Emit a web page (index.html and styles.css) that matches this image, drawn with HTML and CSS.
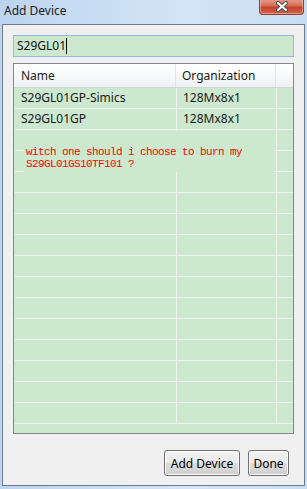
FILE: index.html
```html
<!DOCTYPE html>
<html lang="en">
<head>
  <meta charset="UTF-8" />
  <title>Add Device</title>
  <link rel="stylesheet" href="styles.css">
</head>
<body>

  <div class="window">
    <div class="titlebar">
      <span class="title">Add Device</span>
      <span class="close-btn">
        <svg width="14" height="11" viewBox="0 0 14 11">
          <path d="M3 2 L11 9 M11 2 L3 9" stroke="#4a4f57" stroke-width="4" stroke-linecap="round"/>
          <path d="M3 2 L11 9 M11 2 L3 9" stroke="#ffffff" stroke-width="2" stroke-linecap="round"/>
        </svg>
      </span>
    </div>

    <div class="client">
      <div class="search"><span class="caret">S29GL01</span></div>

      <div class="list">
        <div class="row head">
          <div class="cell">Name</div>
          <div class="cell">Organization</div>
          <div class="cell"></div>
        </div>
        <div class="row">
          <div class="cell">S29GL01GP-Simics</div>
          <div class="cell">128Mx8x1</div>
          <div class="cell"></div>
        </div>
        <div class="row">
          <div class="cell">S29GL01GP</div>
          <div class="cell">128Mx8x1</div>
          <div class="cell"></div>
        </div>
        <div class="row"><div class="cell"></div><div class="cell"></div><div class="cell"></div></div>
        <div class="row"><div class="cell"></div><div class="cell"></div><div class="cell"></div></div>
        <div class="row"><div class="cell"></div><div class="cell"></div><div class="cell"></div></div>
        <div class="row"><div class="cell"></div><div class="cell"></div><div class="cell"></div></div>
        <div class="row"><div class="cell"></div><div class="cell"></div><div class="cell"></div></div>
        <div class="row"><div class="cell"></div><div class="cell"></div><div class="cell"></div></div>
        <div class="row"><div class="cell"></div><div class="cell"></div><div class="cell"></div></div>
        <div class="row"><div class="cell"></div><div class="cell"></div><div class="cell"></div></div>
        <div class="row"><div class="cell"></div><div class="cell"></div><div class="cell"></div></div>
        <div class="row"><div class="cell"></div><div class="cell"></div><div class="cell"></div></div>
        <div class="row"><div class="cell"></div><div class="cell"></div><div class="cell"></div></div>
        <div class="row"><div class="cell"></div><div class="cell"></div><div class="cell"></div></div>
        <div class="row"><div class="cell"></div><div class="cell"></div><div class="cell"></div></div>
        <div class="row"><div class="cell"></div><div class="cell"></div><div class="cell"></div></div>

        <div class="note">witch one should i choose to burn my<br>S29GL01GS10TF101 ?</div>
      </div>

      <div class="buttons">
        <button class="btn btn-add">Add Device</button>
        <button class="btn btn-done">Done</button>
      </div>
    </div>
  </div>

</body>
</html>
```

FILE: styles.css
```css
:root {
  --green: #cce8cf;
  --grid-line: #eef3ef;
  --client-bg: #f0f0f0;
}

body {
  margin: 0;
  font-family: 'Noto Sans', sans-serif;
  font-size: 12px;
  color: #1a1a1a;
}

.window {
  width: 307px;
  height: 489px;
  background: linear-gradient(90deg, #bcd5ee, #d3e5f7 60%, #c9def3);
  display: flex;
  flex-direction: column;
  overflow: hidden;
}

.titlebar {
  position: relative;
  height: 24px;
  display: flex;
  align-items: center;
  padding-left: 4px;
}

.title {
  font-size: 12px;
  color: #1b1b1b;
  margin-top: -3px;
}

.close-btn {
  position: absolute;
  top: -1px;
  right: 3px;
  width: 45px;
  height: 16px;
  box-sizing: border-box;
  border: 1px solid #8a4336;
  border-top: none;
  border-radius: 0 0 4px 4px;
  background: linear-gradient(#e5a08f, #d66a52 45%, #c5422b 55%, #d2654c);
  display: flex;
  align-items: center;
  justify-content: center;
  box-shadow: inset 0 0 0 1px rgba(255, 210, 200, 0.45);
}

.client {
  margin: 0 2px 2px 2px;
  border: 1px solid #6e7c8c;
  background: var(--client-bg);
  padding: 10px 10px 9px;
  display: flex;
  flex-direction: column;
}

.search {
  height: 22px;
  box-sizing: border-box;
  border: 1px solid #8fbbe6;
  background: var(--green);
  padding: 0 0 0 3px;
  display: flex;
  align-items: center;
  font-size: 12px;
  color: #111;
  margin-bottom: 6px;
}

.caret {
  border-right: 1px solid #000;
  line-height: 16px;
}

.list {
  position: relative;
  height: 371px;
  box-sizing: border-box;
  border: 1px solid #828790;
  background: var(--green);
  overflow: hidden;
}

.row {
  display: grid;
  grid-template-columns: 162px 100px 1fr;
  height: 21px;
  box-sizing: border-box;
  border-bottom: 1px solid var(--grid-line);
  margin-left: 1px;
}

.row .cell {
  border-right: 1px solid var(--grid-line);
  padding-left: 6px;
  line-height: 20px;
  white-space: nowrap;
}

.row .cell:last-child {
  border-right: none;
}

.head {
  height: 24px;
  margin-left: 0;
  background: linear-gradient(#ffffff, #f7f8f9 50%, #f0f1f3);
  border-bottom: 1px solid #d5d5d5;
}

.head .cell {
  line-height: 23px;
  border-right: 1px solid #e3e4e6;
}

.head .cell:first-child {
  padding-left: 7px;
}

.note {
  position: absolute;
  left: 10px;
  top: 67px;
  width: 250px;
  height: 41px;
  box-sizing: border-box;
  padding: 15px 0 0 2px;
  background: var(--green);
  color: #ff0000;
  font-family: 'Liberation Mono', monospace;
  font-size: 11px;
  letter-spacing: -0.6px;
  line-height: 12px;
}

.buttons {
  display: flex;
  justify-content: flex-end;
  gap: 8px;
  margin-top: 16px;
  padding-right: 5px;
}

.btn {
  height: 26px;
  padding: 0;
  font-family: 'Noto Sans', sans-serif;
  font-size: 12px;
  color: #000;
  border: 1px solid #707070;
  border-radius: 3px;
  background: linear-gradient(#f2f2f2, #ebebeb 50%, #dddddd 50%, #cfcfcf);
  box-shadow: inset 0 0 0 1px #fcfcfc;
}

.btn-add {
  width: 76px;
}

.btn-done {
  width: 41px;
}
```
